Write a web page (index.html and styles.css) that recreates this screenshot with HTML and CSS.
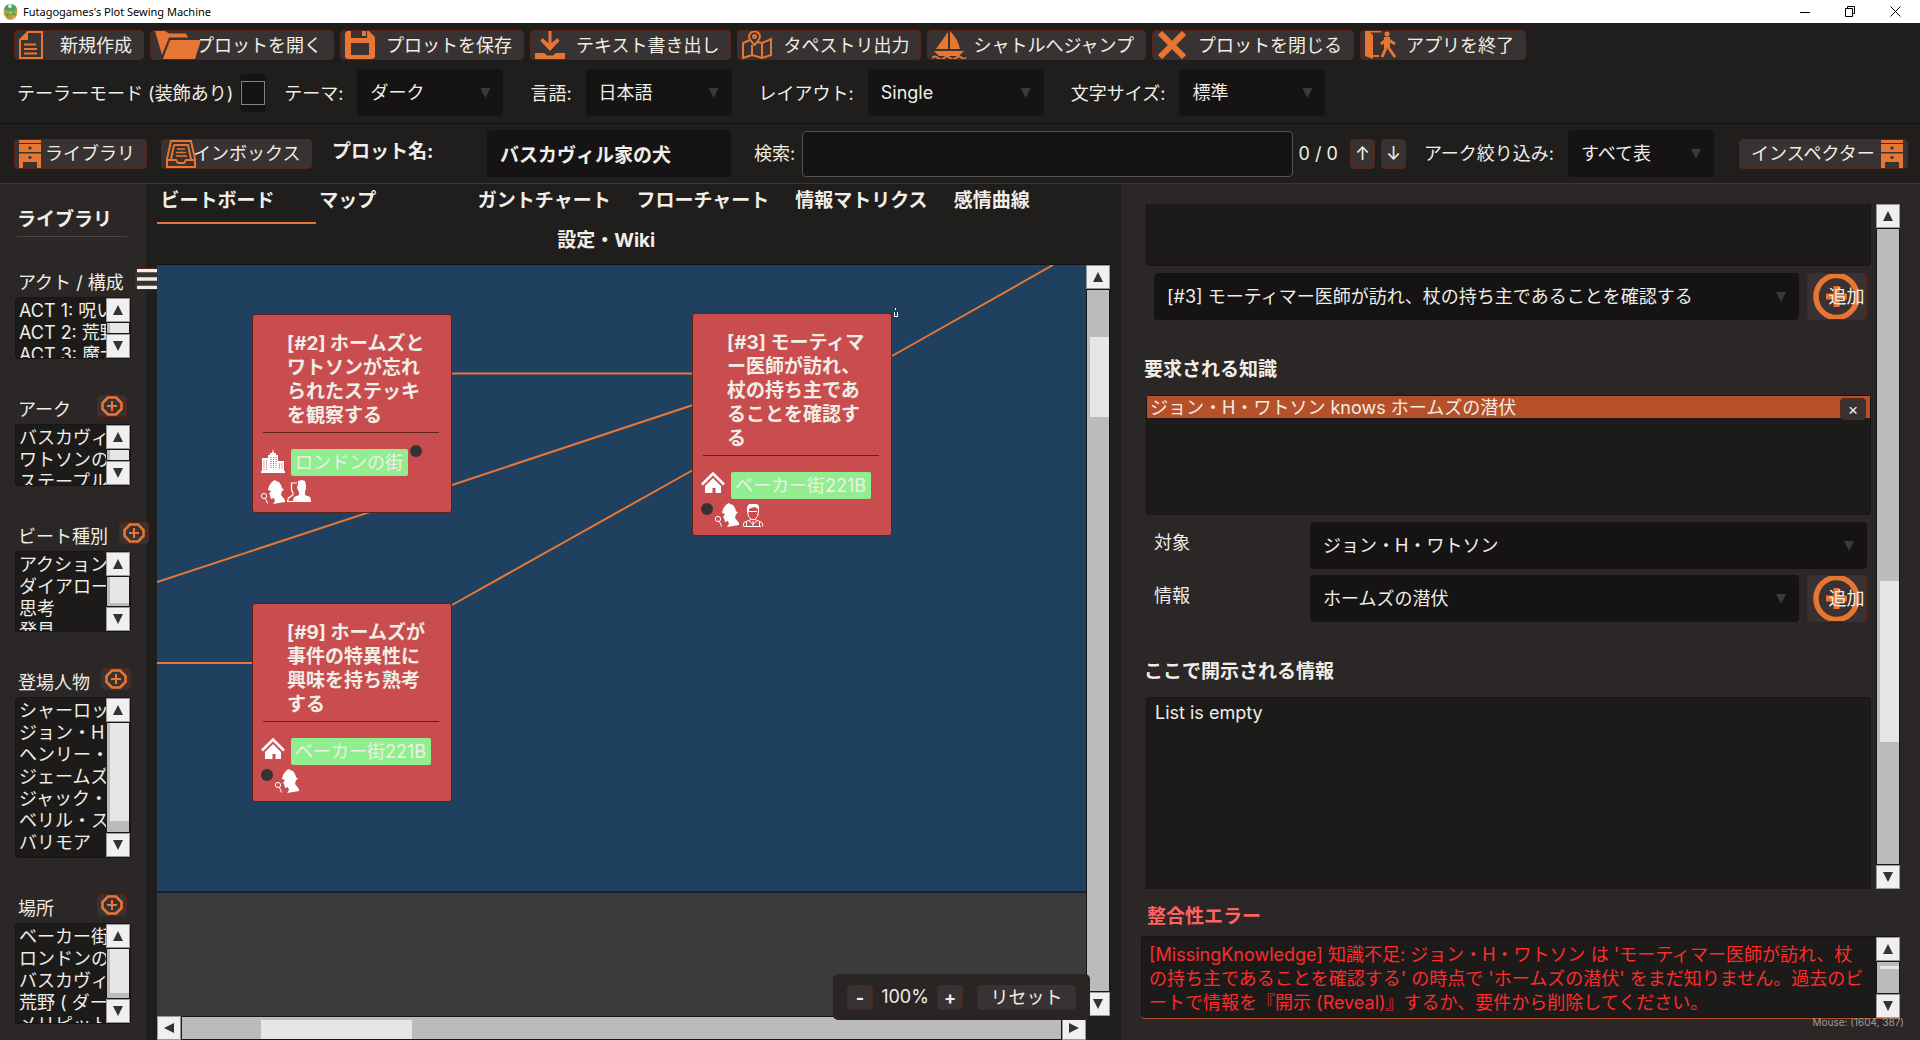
FILE: index.html
```html
<!DOCTYPE html>
<html lang="ja">
<head>
  <meta charset="UTF-8" />
  <meta name="viewport" content="width=device-width, initial-scale=1" />
  <title>Futagogames's Plot Sewing Machine</title>
  <link rel="stylesheet" href="styles.css">
</head>
<body>
  <!-- shared icons -->
  <svg class="defs" width="0" height="0" aria-hidden="true">
    <symbol id="i-up" viewBox="0 0 10 10"><path d="M5 0l5 10H0z"/></symbol>
    <symbol id="i-down" viewBox="0 0 10 10"><path d="M0 0h10L5 10z"/></symbol>
    <symbol id="i-left" viewBox="0 0 10 10"><path d="M10 0v10L0 5z"/></symbol>
    <symbol id="i-right" viewBox="0 0 10 10"><path d="M0 0l10 5-10 5z"/></symbol>
    <symbol id="i-add" viewBox="0 0 22 20"><path d="M7 1.500h8l5.500 5.500v6l-5.500 5.500H7L1.500 13V7z" fill="none" stroke="currentColor" stroke-width="2.600"/><path d="M11 5v10M6 10h10" stroke="currentColor" stroke-width="2"/></symbol>
    <symbol id="i-add-big" viewBox="0 0 47 45"><ellipse cx="23.500" cy="22.500" rx="20.500" ry="21" fill="none" stroke="currentColor" stroke-width="5.500"/><path d="M23.500 12v21M13 22.500h21" stroke="currentColor" stroke-width="6"/></symbol>
    <symbol id="i-drawer" viewBox="0 0 22 28"><path d="M0 0h22v3H0zM0 4h22v8H0zM0 13.500h22V28h-4v-6H4v6H0z" fill="currentColor"/><circle cx="11" cy="8" r="1.600" fill="#333"/><circle cx="11" cy="17.500" r="1.600" fill="#333"/></symbol>
    <symbol id="i-house" viewBox="0 0 24 24"><path d="M12 5l8 8v8h-5.500v-5h-3v5H4v-8z"/><path d="M1 13.500L12 2.500l11 11" fill="none" stroke="#c94d4e" stroke-width="5"/><path d="M1 12.500L12 1.500l11 11" fill="none" stroke="#fff" stroke-width="2.600"/></symbol>
    <symbol id="i-city" viewBox="0 0 24 24"><path d="M0 22h1V9h6V6h2V4h2l1-4 1 4h2v2h2v6h6v10h1v2H0z"/><path d="M3 11.500v9M5.500 11.500v9M10 8v12M12.500 8v12M15 8v12M18.500 14.500v6M21 14.500v6" stroke="#c94d4e" stroke-width="1" stroke-dasharray="1 1"/></symbol>
    <symbol id="i-sherlock" viewBox="0 0 24 24"><path d="M12 1l2-1 1 1 3 1 2 3 1 3 2 2-2 1-1 4 4 5v2l-12 2 2-3-1-3-3 1-1-4-1-1 2-3-3-1 1-4 2-3z"/><circle cx="3" cy="16" r="2.600" fill="none" stroke="#fff"/><path d="M4.500 18.500l2 5" stroke="#fff"/></symbol>
    <symbol id="i-pair" viewBox="0 0 24 24"><path d="M11 1l4-1 3 1 1 4v3l-1 4v3l5 2 1 3v2H6v-2l1-3 5-2v-3l-2-4 1-4z"/><path d="M10 3H4.500v7L6 13v2l-4.500 3-1 3.500H7" fill="none" stroke="#fff" stroke-width="1.200"/></symbol>
    <symbol id="i-doctor" viewBox="0 0 24 24"><path d="M6 10V4l2-3h8l2 2v7l-1-1V6l-3-2-4 1-2 1v3z"/><path d="M6.500 8.500l1 5 3 3h3l3-3 1-5M8 8.500h8M10 16.500l-7 3-1 4M14 16.500l7 3 1 4M8 17.500l4 4 4-4M12 18v5M5.500 19v4M18.500 19v4M3 23.500h17" fill="none" stroke="#fff"/></symbol>
  </svg>

  <header class="titlebar">
    <svg class="logo" viewBox="0 0 15 17"><ellipse cx="7.500" cy="9" rx="7" ry="8" fill="#d9a548"/><path d="M1 7a6.500 6 0 0 1 13 0q-6.500 2-13 0z" fill="#4aa568"/><circle cx="7" cy="3" r="2" fill="#d7f5d5"/><path d="M2 9l4 6M5 8v7M9 8l4 5M12 8l-5 8M2 12l11-1" stroke="#5a9a3c" fill="none"/></svg>
    <span class="title">Futagogames's Plot Sewing Machine</span>
    <div class="window-buttons">
      <button aria-label="最小化"><svg width="11" height="11"><path d="M0 6.500h10" stroke="#000"/></svg></button>
      <button aria-label="元に戻す"><svg width="11" height="11"><path d="M.500 2.500h7v8h-7zM2.500 2V.500h7v7H8" fill="none" stroke="#000"/></svg></button>
      <button aria-label="閉じる"><svg width="11" height="11"><path d="M.500.500l10 10M10.500.500l-10 10" stroke="#000"/></svg></button>
    </div>
  </header>

  <nav class="toolbar">
    <button class="tool"><svg width="24" height="28" viewBox="0 0 24 28"><path d="M9 1h14v26H1V9z" fill="none" stroke="currentColor" stroke-width="2"/><path d="M9 0v9H0zM5 12.500h12v2H5zM5 17h13v2H5zM5 21.500h13v2H5z" fill="currentColor"/></svg>新規作成</button>
    <button class="tool"><svg width="46" height="28" viewBox="0 0 46 28"><path d="M0 0h10l4 2.500h17l2 4H14L7 24z" fill="currentColor"/><path d="M14 9h32l-6 19H8z" fill="currentColor"/><path d="M7 28L15 8.500h30" fill="none" stroke="#383332"/></svg>プロットを開く</button>
    <button class="tool"><svg width="30" height="28" viewBox="0 0 30 28"><path d="M2 0h22l6 6v20l-2 2H2l-2-2V2z" fill="currentColor"/><path d="M6 0h16v7H6zM6 12h18v12H6z" fill="#383332"/><path d="M17 0h4v5h-4z" fill="currentColor"/></svg>プロットを保存</button>
    <button class="tool"><svg width="30" height="28" viewBox="0 0 30 28"><path d="M13.500 0h3v12l6-5 2 3-9.500 10L5.500 10l2-3 6 5zM0 22h9l3 2.500h6l3-2.500h9v6H0z" fill="currentColor"/></svg>テキスト書き出し</button>
    <button class="tool"><svg width="30" height="28" viewBox="0 0 30 28" fill="none" stroke="currentColor" stroke-width="2"><path d="M8 9l-7 3v15l9-3 10 3 9-3V8l-9 4-5-1M10 14v10M20 12v15"/><path d="M12.500 14Q7 8 7 5.500a5.500 5 0 0 1 11 0Q18 8 12.500 14z"/><circle cx="12.500" cy="5.500" r="1.500"/></svg>タペストリ出力</button>
    <button class="tool"><svg width="34" height="28" viewBox="0 0 34 28"><path d="M16 1v17H4zM18 0q8 8 10 18H18zM2 20h30l-5 5H7z" fill="currentColor"/><path d="M0 27q3-3 6 0t6 0 6 0 6 0 6 0 4-1" fill="none" stroke="currentColor" stroke-width="2"/></svg>シャトルへジャンプ</button>
    <button class="tool"><svg width="30" height="28" viewBox="0 0 30 28"><path d="M3 2l24 24M27 2L3 26" stroke="currentColor" stroke-width="6"/></svg>プロットを閉じる</button>
    <button class="tool"><svg width="32" height="28" viewBox="0 0 32 28"><path d="M0 0h16v1.500H5L8 4v20h6v2H8v2l-8-3z" fill="currentColor"/><circle cx="22" cy="3" r="2.500" fill="currentColor"/><path d="M22 6v11M22 8l-6 5M22 8l8 5M21 17l-4 9M23 16l7 10" stroke="currentColor" stroke-width="3" fill="none"/><path d="M19 6h6v11h-6z" fill="currentColor"/></svg>アプリを終了</button>
  </nav>

  <div class="settings">
    <label for="tailor">テーラーモード (装飾あり)</label>
    <span class="check"><input type="checkbox" id="tailor"></span>
    <div class="field"><label for="theme">テーマ:</label><span class="select"><select id="theme"><option>ダーク</option></select></span></div>
    <div class="field"><label for="lang">言語:</label><span class="select"><select id="lang"><option>日本語</option></select></span></div>
    <div class="field"><label for="layout">レイアウト:</label><span class="select wide"><select id="layout"><option>Single</option></select></span></div>
    <div class="field"><label for="size">文字サイズ:</label><span class="select"><select id="size"><option>標準</option></select></span></div>
  </div>

  <div class="plotbar">
    <button class="panel-btn"><svg width="22" height="28"><use href="#i-drawer"/></svg>ライブラリ</button>
    <button class="panel-btn inbox"><svg width="30" height="28" viewBox="0 0 30 28" fill="none" stroke="currentColor" stroke-width="2"><path d="M5 1h20l4 18v8H1v-8zM1 20h9l2 3h6l2-3h9M8 5h14l3 14M8 5L5 19"/><path d="M11 9h8M10 12.500h10M10 16h11" stroke-width="1.500"/></svg>インボックス</button>
    <label class="plot-label" for="plotName">プロット名:</label>
    <input type="text" id="plotName" class="plot-name" value="バスカヴィル家の犬">
    <label class="search-label" for="search">検索:</label>
    <input type="text" id="search" class="search">
    <span class="count">0 / 0</span>
    <button class="step">↑</button>
    <button class="step">↓</button>
    <div class="field arc-filter"><label for="arc">アーク絞り込み:</label><span class="select"><select id="arc"><option>すべて表</option></select></span></div>
    <button class="panel-btn inspector-btn">インスペクター<svg width="22" height="28"><use href="#i-drawer"/></svg></button>
  </div>

  <main class="workspace">
    <aside class="library">
      <h2>ライブラリ</h2>
      <section class="group">
        <div class="group-head"><span>アクト / 構成</span><button class="menu" aria-label="メニュー"><svg width="26" height="20"><path d="M0 1.500h26M0 10h26M0 18.500h26" stroke="#f0eee6" stroke-width="3.500"/></svg></button></div>
        <div class="list short">
          <ul><li>ACT 1: 呪いの伝説</li><li>ACT 2: 荒野の館</li><li>ACT 3: 魔犬の影</li></ul>
          <div class="scroll"><button aria-label="上へ"><svg><use href="#i-up"/></svg></button><div class="track"><div class="thumb"></div></div><button aria-label="下へ"><svg><use href="#i-down"/></svg></button></div>
        </div>
      </section>
      <section class="group">
        <div class="group-head"><span>アーク</span><button class="add" aria-label="アークを追加"><svg width="22" height="20"><use href="#i-add"/></svg></button></div>
        <div class="list short">
          <ul><li>バスカヴィル家</li><li>ワトソンの調査</li><li>ステープルトン</li></ul>
          <div class="scroll"><button aria-label="上へ"><svg><use href="#i-up"/></svg></button><div class="track"><div class="thumb"></div></div><button aria-label="下へ"><svg><use href="#i-down"/></svg></button></div>
        </div>
      </section>
      <section class="group">
        <div class="group-head"><span>ビート種別</span><button class="add" aria-label="ビート種別を追加"><svg width="22" height="20"><use href="#i-add"/></svg></button></div>
        <div class="list beats">
          <ul><li>アクション</li><li>ダイアローグ</li><li>思考</li><li>発見</li></ul>
          <div class="scroll"><button aria-label="上へ"><svg><use href="#i-up"/></svg></button><div class="track"><div class="thumb"></div></div><button aria-label="下へ"><svg><use href="#i-down"/></svg></button></div>
        </div>
      </section>
      <section class="group">
        <div class="group-head"><span>登場人物</span><button class="add" aria-label="登場人物を追加"><svg width="22" height="20"><use href="#i-add"/></svg></button></div>
        <div class="list people">
          <ul><li>シャーロック</li><li>ジョン・H・ワトソン</li><li>ヘンリー・バスカヴィル</li><li>ジェームズ</li><li>ジャック・ステープルトン</li><li>ベリル・ステープルトン</li><li>バリモア</li></ul>
          <div class="scroll"><button aria-label="上へ"><svg><use href="#i-up"/></svg></button><div class="track"><div class="thumb"></div></div><button aria-label="下へ"><svg><use href="#i-down"/></svg></button></div>
        </div>
      </section>
      <section class="group">
        <div class="group-head"><span>場所</span><button class="add" aria-label="場所を追加"><svg width="22" height="20"><use href="#i-add"/></svg></button></div>
        <div class="list places">
          <ul><li>ベーカー街221B</li><li>ロンドンの街</li><li>バスカヴィル館</li><li>荒野 ( ダートムア )</li><li>メリピット荘</li></ul>
          <div class="scroll"><button aria-label="上へ"><svg><use href="#i-up"/></svg></button><div class="track"><div class="thumb"></div></div><button aria-label="下へ"><svg><use href="#i-down"/></svg></button></div>
        </div>
      </section>
    </aside>

    <section class="board">
      <div class="tabs">
        <button class="tab active">ビートボード</button>
        <button class="tab">マップ</button>
        <button class="tab">ガントチャート</button>
        <button class="tab">フローチャート</button>
        <button class="tab">情報マトリクス</button>
        <button class="tab">感情曲線</button>
        <button class="tab">設定・Wiki</button>
      </div>
      <div class="board-view">
        <div class="canvas">
          <div class="sheet"></div>
          <svg class="threads" width="929" height="625"><path d="M295 108.500h241M0 317L295 220 536 140M295 340L536 205M735 91L896 0M0 398h96" fill="none" stroke="#e77736" stroke-width="2"/><path d="M738 43h1v2h-1zM737 47h1v4h2v-4h1v5h-4z" fill="#fff"/></svg>
          <article class="card card-2">
            <h3>[#2] ホームズとワトソンが忘れられたステッキを観察する</h3>
            <div class="meta">
              <span class="place"><svg><use href="#i-city"/></svg><span class="tag">ロンドンの街</span></span>
              <i class="dot"></i>
              <svg class="person"><use href="#i-sherlock"/></svg>
              <svg class="person"><use href="#i-pair"/></svg>
            </div>
          </article>
          <article class="card card-3">
            <h3>[#3] モーティマー医師が訪れ、杖の持ち主であることを確認する</h3>
            <div class="meta">
              <span class="place"><svg><use href="#i-house"/></svg><span class="tag">ベーカー街221B</span></span>
              <i class="dot"></i>
              <svg class="person"><use href="#i-sherlock"/></svg>
              <svg class="person"><use href="#i-doctor"/></svg>
            </div>
          </article>
          <article class="card card-9">
            <h3>[#9] ホームズが事件の特異性に興味を持ち熟考する</h3>
            <div class="meta">
              <span class="place"><svg><use href="#i-house"/></svg><span class="tag">ベーカー街221B</span></span>
              <i class="dot"></i>
              <svg class="person"><use href="#i-sherlock"/></svg>
            </div>
          </article>
        </div>
        <div class="scroll board-v"><button aria-label="上へ"><svg><use href="#i-up"/></svg></button><div class="track"><div class="thumb"></div></div><button aria-label="下へ"><svg><use href="#i-down"/></svg></button></div>
        <div class="scroll-h"><button aria-label="左へ"><svg><use href="#i-left"/></svg></button><div class="track"><div class="thumb"></div></div><button aria-label="右へ"><svg><use href="#i-right"/></svg></button></div>
        <div class="zoom">
          <button class="zoom-btn">-</button>
          <span>100%</span>
          <button class="zoom-btn">+</button>
          <button class="reset">リセット</button>
        </div>
      </div>
    </section>

    <aside class="inspector">
      <div class="inspector-view">
        <div class="inspector-body">
          <div class="box box-top"></div>
          <div class="row">
            <span class="select grow"><select aria-label="ビート"><option>[#3] モーティマー医師が訪れ、杖の持ち主であることを確認する</option></select></span>
            <button class="add-big"><svg width="47" height="45"><use href="#i-add-big"/></svg>追加</button>
          </div>
          <h3>要求される知識</h3>
          <div class="box box-knowledge">
            <div class="selected">ジョン・H・ワトソン knows ホームズの潜伏<button class="remove">×</button></div>
          </div>
          <div class="row">
            <label for="target">対象</label>
            <span class="select grow"><select id="target"><option>ジョン・H・ワトソン</option></select></span>
          </div>
          <div class="row">
            <label for="info">情報</label>
            <span class="select grow"><select id="info"><option>ホームズの潜伏</option></select></span>
            <button class="add-big"><svg width="47" height="45"><use href="#i-add-big"/></svg>追加</button>
          </div>
          <h3>ここで開示される情報</h3>
          <div class="box box-reveal">List is empty</div>
        </div>
        <div class="scroll inspector-v"><button aria-label="上へ"><svg><use href="#i-up"/></svg></button><div class="track"><div class="thumb"></div></div><button aria-label="下へ"><svg><use href="#i-down"/></svg></button></div>
      </div>
      <h3 class="error-title">整合性エラー</h3>
      <div class="errors">
        <p>[MissingKnowledge] 知識不足: ジョン・H・ワトソン は 'モーティマー医師が訪れ、杖の持ち主であることを確認する' の時点で 'ホームズの潜伏' をまだ知りません。過去のビートで情報を『開示 (Reveal)』するか、要件から削除してください。</p>
        <div class="scroll"><button aria-label="上へ"><svg><use href="#i-up"/></svg></button><div class="track"><div class="thumb"></div></div><button aria-label="下へ"><svg><use href="#i-down"/></svg></button></div>
      </div>
      <div class="mouse">Mouse: (1604, 387)</div>
    </aside>
  </main>
</body>
</html>
```
FILE: styles.css
```css
* {
  box-sizing: border-box;
}
body {
  margin: 0;
  height: 100vh;
  display: flex;
  flex-direction: column;
  overflow: hidden;
  background: #1f1e1c;
  color: #f0eee6;
  font-family: Inter, "Noto Sans CJK JP", sans-serif;
  font-size: 18px;
  line-height: 24px;
}
button, input, select {
  font: inherit;
  color: inherit;
}
button {
  padding: 0;
  border: 1px solid #5a2416;
  border-radius: 4px;
  background: #383332;
  white-space: nowrap;
}
h2, h3 {
  margin: 0;
  font-size: 19px;
  font-weight: 700;
}
.defs {
  position: absolute;
}

/* title bar */
.titlebar {
  display: flex;
  align-items: center;
  flex: none;
  height: 23px;
  padding: 0 2px 0 3px;
  background: #fff;
  color: #000;
  font-family: "Noto Sans", sans-serif;
  font-size: 11px;
}
.logo {
  width: 15px;
  height: 17px;
  margin-right: 5px;
}
.window-buttons {
  display: flex;
  margin-left: auto;
}
.window-buttons button {
  display: flex;
  align-items: center;
  justify-content: center;
  width: 45px;
  height: 20px;
  border: 0;
  background: none;
}

/* toolbar */
.toolbar {
  display: flex;
  flex: none;
  gap: 6px;
  padding: 7px 14px 9px;
}
.tool {
  position: relative;
  height: 30px;
  padding: 2px 11px 0 45px;
}
.tool svg, .panel-btn svg {
  position: absolute;
  left: 4px;
  top: 0;
  color: #e77534;
}

.settings {
  display: flex;
  align-items: center;
  flex: none;
  height: 55px;
  padding: 0 17px 7px;
  border-bottom: 1px solid #141312;
}
.settings label {
  padding-top: 2px;
}
.check {
  display: flex;
  align-items: center;
  justify-content: center;
  width: 26px;
  height: 38px;
  margin: 0 18px 0 7px;
  border-radius: 4px;
  background: #151314;
}
.check input {
  appearance: none;
  width: 24px;
  height: 24px;
  margin: 0;
  border: 1px solid #858383;
}
.field {
  display: flex;
  align-items: center;
  gap: 14px;
  margin-right: 27px;
}
.select {
  position: relative;
  display: flex;
  width: 146px;
}
.select.wide {
  width: 176px;
}
.select.grow {
  flex: 1;
  width: auto;
}
.select select {
  appearance: none;
  width: 100%;
  height: 47px;
  padding: 1px 28px 0 13px;
  border: 0;
  border-radius: 4px;
  background: #151314;
}
.select::after {
  content: "";
  position: absolute;
  right: 13px;
  top: 19px;
  width: 10px;
  height: 10px;
  background: #3b3a3a;
  clip-path: polygon(0 0, 100% 0, 50% 100%);
  pointer-events: none;
}

/* plot bar */
.plotbar {
  display: flex;
  align-items: center;
  flex: none;
  height: 60px;
  padding: 0 12px 0 14px;
  border-bottom: 1px solid #3a3838;
}
.panel-btn {
  position: relative;
  width: 133px;
  height: 30px;
  padding: 1px 0 0 30px;
  margin-right: 14px;
  text-align: left;
}
.inbox {
  width: 151px;
  padding-left: 31px;
  margin-right: 20px;
}
.inspector-btn {
  width: 169px;
  padding-left: 11px;
  margin: 0 0 0 auto;
}
.inspector-btn svg {
  left: auto;
  right: 4px;
}
.plot-label {
  width: 155px;
  padding-bottom: 4px;
  font-size: 19px;
  font-weight: 700;
}
.plot-name {
  width: 244px;
  height: 47px;
  padding: 0 13px;
  border: 0;
  border-radius: 4px;
  background: #151314;
  font-size: 19px;
  font-weight: 700;
}
.search-label {
  margin: 0 7px 0 23px;
}
.search {
  flex: 1;
  min-width: 0;
  height: 46px;
  border: 1px solid #555351;
  border-radius: 4px;
  background: #151314;
}
.count {
  margin: 0 12px 0 6px;
}
.step {
  width: 25px;
  height: 30px;
  margin-right: 6px;
}
.arc-filter {
  margin: 0 25px 0 12px;
}

/* workspace */
.workspace {
  display: flex;
  flex: 1;
  min-height: 0;
}
.library {
  position: relative;
  z-index: 1;
  flex: none;
  width: 146px;
  padding: 24px 15px 0;
  background: #2b2726;
}
.library h2 {
  width: 110px;
  margin: 0 2px 31px;
  padding-bottom: 4px;
  border-bottom: 1px solid #4a4746;
}
.group {
  margin-bottom: 36px;
}
.group-head {
  display: flex;
  gap: 11px;
  height: 22px;
  padding-left: 3px;
  margin-bottom: 7px;
  white-space: nowrap;
}
.group-head span {
  flex: none;
  min-width: 68px;
  line-height: 29px;
}
.add, .menu {
  display: flex;
  flex: none;
  align-items: center;
  justify-content: center;
  width: 30px;
  height: 22px;
  color: #e77534;
}
.list {
  display: flex;
  width: 116px;
  padding: 1px;
  border-radius: 4px;
  background: #1d1b1a;
  box-shadow: inset 0 0 0 1px #181615;
}
.list.short {
  height: 62px;
}
.list.beats {
  height: 81px;
}
.list.people {
  height: 161px;
}
.list.places {
  height: 101px;
}
.list ul {
  flex: 1;
  min-width: 0;
  margin: 0;
  padding: 2px 0 0 3px;
  overflow: hidden;
  list-style: none;
  line-height: 22px;
  white-space: nowrap;
}

/* scroll bars */
.scroll, .scroll-h {
  display: flex;
  flex: none;
}
.scroll {
  flex-direction: column;
  width: 24px;
}
.scroll button, .scroll-h button {
  display: flex;
  align-items: center;
  justify-content: center;
  flex: none;
  width: 24px;
  height: 24px;
  border: 1px solid #999;
  border-radius: 0;
  background: #f0f0f0;
}
.scroll button svg, .scroll-h button svg {
  width: 10px;
  height: 10px;
  fill: #333;
}
.track {
  flex: 1;
  min-height: 0;
  padding-left: 3px;
  border: 1px solid #181616;
  background: #bbb;
}
.thumb {
  height: 100%;
  background: #e6e6e6;
}
.beats .thumb, .people .thumb, .places .thumb {
  height: 90%;
}

/* board */
.board {
  display: flex;
  flex-direction: column;
  flex: 1;
  min-width: 0;
  padding: 0 10px 0 11px;
}
.tabs {
  display: flex;
  flex-wrap: wrap;
  justify-content: center;
  border-bottom: 1px solid #141312;
}
.tab {
  width: 16.65%;
  height: 40px;
  padding: 0 0 4px 3px;
  border: 0;
  border-bottom: 2px solid transparent;
  border-radius: 0;
  background: none;
  font-size: 19px;
  font-weight: 700;
  text-align: left;
}
.tab.active {
  border-bottom-color: #e77534;
}
.board-view {
  position: relative;
  z-index: 2;
  display: grid;
  grid-template-columns: 1fr 24px;
  grid-template-rows: 1fr 24px;
  flex: 1;
  min-height: 0;
}
.canvas {
  position: relative;
  overflow: hidden;
  background: #3d3a3b;
}
.sheet {
  height: 628px;
  border-bottom: 2px solid #10233a;
  background: #20405f;
}
.threads {
  position: absolute;
  left: 0;
  top: 0;
}
.card {
  position: absolute;
  width: 200px;
  padding: 17px 8px 8px;
  border: 1px solid #5c2418;
  border-radius: 3px;
  background: #c94d4e;
}
.card-2 {
  left: 95px;
  top: 49px;
}
.card-3 {
  left: 535px;
  top: 48px;
}
.card-9 {
  left: 95px;
  top: 338px;
}
.card h3 {
  margin: 0 4px 0 2px;
  padding: 0 8px 4px 24px;
  border-bottom: 1px solid #5c2418;
  line-break: anywhere;
}
.meta {
  display: flex;
  flex-wrap: wrap;
  align-items: flex-start;
  gap: 4px 2px;
  padding-top: 12px;
}
.place {
  display: flex;
  gap: 6px;
  margin-top: 4px;
}
.place svg, .person {
  width: 24px;
  height: 24px;
  fill: #fff;
}
.tag {
  padding: 0 5px 0 4px;
  line-height: 27px;
  border-radius: 2px;
  background: #90ee90;
}
.dot {
  width: 12px;
  height: 12px;
  border-radius: 50%;
  background: #333;
}
.board-v .track {
  padding-top: 47px;
}
.board-v .thumb {
  height: 80px;
}
.scroll-h .track {
  padding: 3px 0 0 79px;
}
.scroll-h .thumb {
  width: 151px;
}
.zoom {
  position: absolute;
  right: 20px;
  bottom: 20px;
  display: flex;
  align-items: center;
  height: 46px;
  padding: 0 14px;
  border-radius: 5px;
  background: #292524;
}
.zoom span {
  width: 64px;
  text-align: center;
}
.zoom-btn {
  width: 26px;
  height: 25px;
  font-weight: 700;
}
.reset {
  width: 99px;
  height: 25px;
  margin-left: 14px;
}

/* inspector */
.inspector {
  position: relative;
  display: flex;
  flex-direction: column;
  width: 41.666%;
  padding: 20px 20px 0 20px;
  border-left: 1px solid #1d1b1a;
  background: #2b2726;
}
.inspector-view {
  display: flex;
  flex: 1;
  min-height: 0;
}
.inspector-body {
  flex: 1;
  min-width: 0;
  padding: 0 5px;
  overflow: hidden;
}
.box {
  border: 1px solid #171514;
  border-radius: 4px;
  background: #1d1b1a;
}
.box-top {
  height: 62px;
  margin-bottom: 7px;
  border-top: 0;
  border-radius: 0 0 4px 4px;
}
.row {
  display: flex;
  gap: 8px;
  margin: 0 4px 6px 8px;
}
.row label {
  width: 148px;
  line-height: 41px;
}
.inspector-body h3 {
  margin-left: -2px;
  padding: 32px 0 13px;
}
.box-knowledge {
  height: 120px;
  margin-bottom: 7px;
}
.selected {
  position: relative;
  height: 22px;
  padding-left: 3px;
  line-height: 23px;
  background: #b55029;
}
.remove {
  position: absolute;
  right: 4px;
  top: 2px;
  width: 26px;
  height: 22px;
  font-size: 16px;
  line-height: 20px;
}
.box-reveal {
  height: 240px;
  padding: 3px 8px;
}
.add-big {
  position: relative;
  isolation: isolate;
  width: 60px;
  height: 47px;
  padding-left: 19px;
}
.add-big svg {
  position: absolute;
  left: 5px;
  top: 0;
  z-index: -1;
  color: #e77534;
}
.inspector-v .thumb {
  height: 161px;
}
.inspector-v .track {
  padding-top: 352px;
}
.error-title {
  padding: 16px 0 7px 6px;
  color: #ff6262;
}
.errors {
  display: flex;
  flex: none;
  height: 83px;
  padding: 1px 0 0 8px;
  border-radius: 4px;
  border-bottom: 1px solid #b55029;
  background: #1d1b1a;
  box-shadow: inset 0 0 0 1px #171514;
}
.errors p {
  flex: 1;
  min-width: 0;
  margin: 6px 9px 0 0;
  color: #ff2a2a;
  line-break: anywhere;
}
.errors .thumb {
  height: 3px;
  margin-top: 4px;
}
.mouse {
  position: absolute;
  right: 16px;
  bottom: 12px;
  color: #a09d9b;
  font-size: 10px;
  line-height: 12px;
}
.errors {
  margin-bottom: 21px;
}
```
